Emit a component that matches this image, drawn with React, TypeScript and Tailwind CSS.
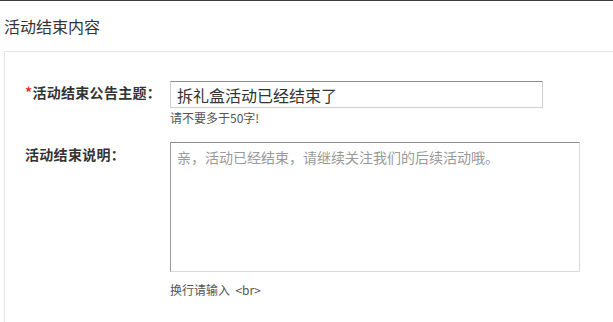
export default function App() {
  return (
    <div
      className="h-[322px] w-[613px] overflow-hidden border-t border-[#3a3a3a] bg-white text-[#333]"
      style={{ fontFamily: '"Noto Sans CJK SC", "Noto Sans", sans-serif' }}
    >
      <div className="flex h-[50px] items-center pl-[4px] text-[16px]">活动结束内容</div>
      <div className="ml-[4px] h-full border-l border-t border-[#e6e6e6] pt-[29px]">
        <div className="flex">
          <div className="w-[165px] shrink-0 pl-[20px] pt-[1px] text-[14px] font-bold leading-[20px] tracking-[0.3px]">
            <span className="text-[#d9342b]">*</span>活动结束公告主题：
          </div>
          <div className="flex flex-col">
            <div className="flex h-[27px] w-[373px] items-center border border-[#cfcfcf] border-t-[#8c8c8c] px-[6px] text-[16px] text-[#333]">
              拆礼盒活动已经结束了
            </div>
            <div className="mt-[2px] text-[12px] leading-[16px] text-[#555]">请不要多于50字!</div>
          </div>
        </div>
        <div className="mt-[16px] flex">
          <div className="w-[165px] shrink-0 pl-[20px] pt-[2px] text-[14px] font-bold leading-[20px] tracking-[0.3px]">
            活动结束说明：
          </div>
          <div className="flex flex-col">
            <div className="h-[130px] w-[410px] border border-[#d9d9d9] border-l-[#9a9a9a] border-t-[#8c8c8c] px-[6px] pt-[4px] text-[14px] leading-[20px] text-[#999]">
              亲，活动已经结束，请继续关注我们的后续活动哦。
            </div>
            <div className="mt-[10px] text-[12px] leading-[16px] text-[#555]">
              换行请输入&nbsp; &lt;br&gt;
            </div>
          </div>
        </div>
      </div>
    </div>
  );
}
